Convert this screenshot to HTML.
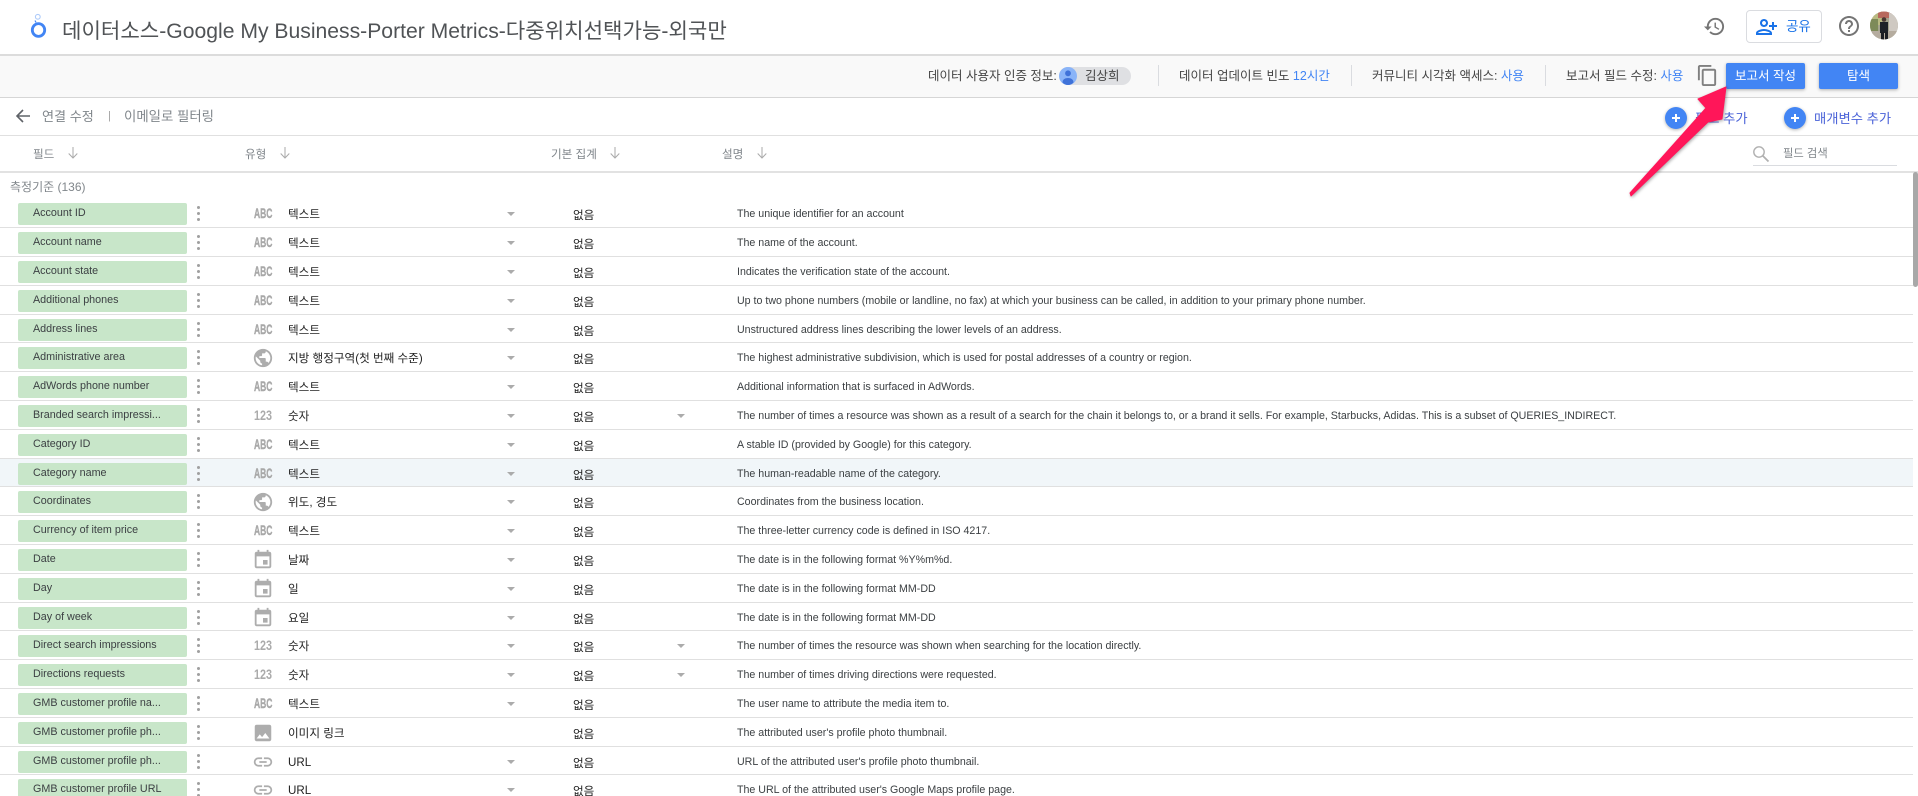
<!DOCTYPE html>
<html lang="ko"><head><meta charset="utf-8"><title>데이터소스</title>
<style>
html,body{margin:0;padding:0;width:1918px;height:796px;overflow:hidden;background:#fff}
body{position:relative;font-family:"Liberation Sans","Noto Sans CJK KR",sans-serif;color:#333}
.x{position:absolute;white-space:nowrap}
.l{position:absolute;left:0;width:1918px;background:#e0e0e0;height:1px}
.bl{color:#4285f4}
.hd{font-size:11.6px;color:#80868b;top:147px;line-height:15px}
.tb{font-size:12.5px;color:#444;top:68px;line-height:17px}
.sep{position:absolute;top:65px;width:1px;height:21px;background:#dadce0}
.btn{position:absolute;top:63px;width:79px;height:26px;background:#4285f4;color:#fff;border-radius:2px;font-size:12.5px;line-height:26px;text-align:center;box-shadow:0 1px 3px rgba(0,0,0,.3)}
.r{position:absolute;left:0;width:1913px;border-bottom:1px solid #e0e0e0;box-sizing:content-box}
.r>*{position:absolute}
.p{left:18px;top:4px;width:169px;height:22px;background:#c8e6c9;border-radius:2px;padding-left:15px;box-sizing:border-box;font-size:10.75px;line-height:21px;color:#3c4043;white-space:nowrap}
.k{left:197px;top:13px;width:3px;height:3px;border-radius:50%;background:#a0a0a0;box-shadow:0 -6px 0 #a0a0a0,0 6px 0 #a0a0a0}
.ic{left:252px;top:4px;width:22px;height:22px;fill:#adadad}
.abc{left:254px;top:7px;font:bold 13.5px/15px "Liberation Sans",sans-serif;color:#a8a8a8;-webkit-text-stroke:.4px #a8a8a8;transform:scaleX(.63);transform-origin:0 0}
.n{left:254px;top:7px;font:bold 13.5px/15px "Liberation Sans",sans-serif;color:#ababab;transform:scaleX(.8);transform-origin:0 0}
.t{left:288px;top:8px;font-size:11.6px;line-height:16px;color:#222;white-space:nowrap}
.a{left:507px;top:13px;width:0;height:0;border-left:4px solid transparent;border-right:4px solid transparent;border-top:4px solid #ababab}
.b{left:677px;top:13px;width:0;height:0;border-left:4px solid transparent;border-right:4px solid transparent;border-top:4px solid #ababab}
.g{left:573px;top:9px;font-size:11.6px;line-height:16px;color:#222}
.d{left:737px;top:8px;font-size:10.65px;line-height:15px;color:#3c4043;white-space:nowrap}
.ar{position:absolute;top:147px;width:10px;height:12px;fill:none;stroke:#aaa;stroke-width:1}
</style></head><body>
<svg width="0" height="0" style="position:absolute"><defs>
<symbol id="gl" viewBox="0 0 24 24"><path d="M12 2C6.48 2 2 6.48 2 12s4.48 10 10 10 10-4.48 10-10S17.52 2 12 2zm-1 17.93c-3.95-.49-7-3.85-7-7.93 0-.62.08-1.21.21-1.79L9 15v1c0 1.1.9 2 2 2v1.93zm6.9-2.54c-.26-.81-1-1.39-1.9-1.39h-1v-3c0-.55-.45-1-1-1H8v-2h2c.55 0 1-.45 1-1V7h2c1.1 0 2-.9 2-2v-.41c2.93 1.19 5 4.06 5 7.41 0 2.08-.8 3.97-2.1 5.39z"/></symbol>
<symbol id="ev" viewBox="0 0 24 24"><path d="M17 12h-5v5h5v-5zM16 1v2H8V1H6v2H5c-1.11 0-1.99.9-1.99 2L3 19c0 1.1.89 2 2 2h14c1.1 0 2-.9 2-2V5c0-1.1-.9-2-2-2h-1V1h-2zm3 18H5V8h14v11z"/></symbol>
<symbol id="im" viewBox="0 0 24 24"><path d="M21 19V5c0-1.1-.9-2-2-2H5c-1.1 0-2 .9-2 2v14c0 1.1.9 2 2 2h14c1.1 0 2-.9 2-2zM8.5 13.5l2.5 3.01L14.5 12l4.5 6H5l3.5-4.5z"/></symbol>
<symbol id="ln" viewBox="0 0 24 24"><path d="M3.9 12c0-1.71 1.39-3.1 3.1-3.1h4V7H7c-2.76 0-5 2.24-5 5s2.24 5 5 5h4v-1.9H7c-1.71 0-3.1-1.39-3.1-3.1zM8 13h8v-2H8v2zm9-6h-4v1.9h4c1.71 0 3.1 1.39 3.1 3.1s-1.39 3.1-3.1 3.1h-4V17h4c2.76 0 5-2.24 5-5s-2.24-5-5-5z"/></symbol>
</defs></svg>

<!-- header -->
<svg class="x" style="left:28px;top:12px" width="22" height="28" viewBox="0 0 22 28"><ellipse cx="10.5" cy="18" rx="6.2" ry="6.4" fill="none" stroke="#4285f4" stroke-width="2.8"/><circle cx="9.8" cy="4.8" r="2.4" fill="none" stroke="#aecbfa" stroke-width="1.1"/><path d="M8 10.5l-1-2" stroke="#4285f4" stroke-width="1.2"/></svg>
<div class="x" id="title" style="left:62px;top:18px;font-size:21.15px;line-height:28px;color:#505356">데이터소스-Google My Business-Porter Metrics-다중위치선택가능-외국만</div>
<svg class="x" style="left:1703px;top:15px" width="23" height="23" viewBox="0 0 24 24" fill="#757575"><path d="M13 3c-4.97 0-9 4.03-9 9H1l3.89 3.89.07.14L9 12H6c0-3.87 3.13-7 7-7s7 3.13 7 7-3.13 7-7 7c-1.93 0-3.68-.79-4.94-2.06l-1.42 1.42C8.27 19.99 10.51 21 13 21c4.97 0 9-4.03 9-9s-4.03-9-9-9zm-1 5v5l4.28 2.54.72-1.21-3.5-2.08V8H12z"/></svg>
<div class="x" style="left:1746px;top:10px;width:76px;height:33px;border:1px solid #dadce0;border-radius:4px;box-sizing:border-box"></div>
<svg class="x" style="left:1755px;top:15px" width="24" height="24" viewBox="0 0 24 24" fill="#1a73e8"><path d="M9 12c2.21 0 4-1.79 4-4s-1.79-4-4-4-4 1.79-4 4 1.79 4 4 4zm0-6c1.1 0 2 .9 2 2s-.9 2-2 2-2-.9-2-2 .9-2 2-2zm0 8c-2.67 0-8 1.34-8 4v2h16v-2c0-2.66-5.33-4-8-4zm-6 4c.22-.72 3.31-2 6-2 2.7 0 5.8 1.29 6 2H3zm16-3v-3h3v-2h-3V7h-2v3h-3v2h3v3h2z"/></svg>
<div class="x" style="left:1786px;top:18px;font-size:13.5px;line-height:18px;color:#1a73e8">공유</div>
<svg class="x" style="left:1837px;top:14px" width="24" height="24" viewBox="0 0 24 24" fill="#757575"><path d="M11 18h2v-2h-2v2zm1-16C6.48 2 2 6.48 2 12s4.48 10 10 10 10-4.48 10-10S17.52 2 12 2zm0 18c-4.41 0-8-3.59-8-8s3.59-8 8-8 8 3.59 8 8-3.59 8-8 8zm0-14c-2.21 0-4 1.79-4 4h2c0-1.1.9-2 2-2s2 .9 2 2c0 2-3 1.75-3 5h2c0-2.25 3-2.5 3-5 0-2.21-1.79-4-4-4z"/></svg>
<svg class="x" style="left:1870px;top:11px" width="28" height="29" viewBox="0 0 28 29"><defs><clipPath id="c"><circle cx="14" cy="14.5" r="14"/></clipPath></defs><g clip-path="url(#c)"><rect width="28" height="29" fill="#a5a48e"/><rect width="12" height="14" fill="#b9ba82"/><rect x="0" y="8" width="8" height="12" fill="#7d8a58"/><rect x="8" y="0" width="14" height="7" fill="#b8695e"/><rect x="19" y="2" width="9" height="20" fill="#cfc9c2"/><rect y="20" width="28" height="9" fill="#b5ac9f"/><rect x="10" y="11" width="8" height="11" fill="#1d2127"/><rect x="11" y="21" width="3" height="8" fill="#1b1d22"/><rect x="15" y="21" width="3" height="8" fill="#1b1d22"/><circle cx="14" cy="8.5" r="2.3" fill="#4a3a33"/></g></svg>
<div class="l" style="top:54px;height:2px;background:#dcdcdc"></div>

<!-- toolbar -->
<div class="x" style="left:0;top:56px;width:1918px;height:41px;background:#f9f9f9"></div>
<div class="x tb" style="left:928px">데이터 사용자 인증 정보:</div>
<div class="x" style="left:1059px;top:67px;width:72px;height:18px;border-radius:9px;background:#dfe0e3"></div>
<svg class="x" style="left:1059px;top:67px" width="18" height="18" viewBox="0 0 18 18"><circle cx="9" cy="9" r="9" fill="#8ab4f8"/><circle cx="9" cy="6.3" r="2.9" fill="#3f72d9"/><path d="M3.5 15.5c0-3 2.5-4.5 5.5-4.5s5.5 1.5 5.5 4.5c-1.5 1.7-3.5 2.5-5.5 2.5s-4-.8-5.5-2.5z" fill="#3f72d9"/></svg>
<div class="x tb" style="left:1085px;color:#444">김상희</div>
<div class="sep" style="left:1158px"></div>
<div class="x tb" style="left:1179px">데이터 업데이트 빈도 <span class="bl">12시간</span></div>
<div class="sep" style="left:1351px"></div>
<div class="x tb" style="left:1372px">커뮤니티 시각화 액세스: <span class="bl">사용</span></div>
<div class="sep" style="left:1545px"></div>
<div class="x tb" style="left:1566px">보고서 필드 수정: <span class="bl">사용</span></div>
<svg class="x" style="left:1696px;top:64px" width="23" height="23" viewBox="0 0 24 24" fill="#808080"><path d="M16 1H4c-1.1 0-2 .9-2 2v14h2V3h12V1zm3 4H8c-1.1 0-2 .9-2 2v14c0 1.1.9 2 2 2h11c1.1 0 2-.9 2-2V7c0-1.1-.9-2-2-2zm0 16H8V7h11v14z"/></svg>
<div class="btn" style="left:1726px">보고서 작성</div>
<div class="btn" style="left:1819px">탐색</div>
<div class="l" style="top:97px;height:1px;background:#d6d6d6"></div>

<!-- subheader -->
<svg class="x" style="left:15px;top:108px" width="16" height="16" viewBox="0 0 16 16" fill="none" stroke="#5f6368" stroke-width="1.6"><path d="M15 8H2M8 2L2 8l6 6"/></svg>
<div class="x" style="left:42px;top:108px;font-size:13.1px;line-height:18px;color:#80868b">연결 수정</div>
<div class="x" style="left:108px;top:109px;font-size:11px;line-height:15px;color:#a0a0a0">|</div>
<div class="x" style="left:124px;top:108px;font-size:13.4px;line-height:18px;color:#80868b">이메일로 필터링</div>
<div class="x" style="left:1665px;top:107px;width:22px;height:22px;border-radius:50%;background:#4285f4;box-shadow:0 1px 3px rgba(0,0,0,.3)"></div>
<div class="x" style="left:1672px;top:117px;width:8px;height:2px;background:#fff"></div><div class="x" style="left:1675px;top:114px;width:2px;height:8px;background:#fff"></div>
<div class="x" style="left:1695px;top:110px;font-size:13.3px;line-height:18px;color:#4a62d8">필드 추가</div>
<div class="x" style="left:1784px;top:107px;width:22px;height:22px;border-radius:50%;background:#4285f4;box-shadow:0 1px 3px rgba(0,0,0,.3)"></div>
<div class="x" style="left:1791px;top:117px;width:8px;height:2px;background:#fff"></div><div class="x" style="left:1794px;top:114px;width:2px;height:8px;background:#fff"></div>
<div class="x" style="left:1814px;top:110px;font-size:13.3px;line-height:18px;color:#4a62d8">매개변수 추가</div>
<div class="l" style="top:135px"></div>

<!-- column head -->
<div class="x hd" style="left:33px">필드</div><svg class="ar" style="left:68px" viewBox="0 0 10 12"><path d="M5 0v11M.7 6.5L5 11l4.3-4.5"/></svg>
<div class="x hd" style="left:245px">유형</div><svg class="ar" style="left:280px" viewBox="0 0 10 12"><path d="M5 0v11M.7 6.5L5 11l4.3-4.5"/></svg>
<div class="x hd" style="left:551px">기본 집계</div><svg class="ar" style="left:610px" viewBox="0 0 10 12"><path d="M5 0v11M.7 6.5L5 11l4.3-4.5"/></svg>
<div class="x hd" style="left:722px">설명</div><svg class="ar" style="left:757px" viewBox="0 0 10 12"><path d="M5 0v11M.7 6.5L5 11l4.3-4.5"/></svg>
<svg class="x" style="left:1752px;top:145px" width="18" height="18" viewBox="0 0 18 18" fill="none" stroke="#b0b0b0" stroke-width="1.4"><circle cx="7" cy="7" r="5.2"/><path d="M11 11l5.5 5.5" stroke-width="1.8"/></svg>
<div class="x" style="left:1783px;top:147px;font-size:11.3px;line-height:15px;color:#80868b">필드 검색</div>
<div class="x" style="left:1753px;top:165px;width:144px;height:1px;background:#dadce0"></div>
<div class="l" style="top:171px;height:2px;background:#e2e2e2"></div>
<div class="x" style="left:10px;top:179px;font-size:12px;line-height:16px;color:#80868b">측정기준 (136)</div>

<!-- rows -->
<div class="r" style="top:199px;height:28px"><div class="p">Account ID</div><i class="k"></i><span class="abc">ABC</span><span class="t">텍스트</span><b class="a"></b><span class="g">없음</span><span class="d">The unique identifier for an account</span></div>
<div class="r" style="top:228px;height:28px"><div class="p">Account name</div><i class="k"></i><span class="abc">ABC</span><span class="t">텍스트</span><b class="a"></b><span class="g">없음</span><span class="d">The name of the account.</span></div>
<div class="r" style="top:257px;height:28px"><div class="p">Account state</div><i class="k"></i><span class="abc">ABC</span><span class="t">텍스트</span><b class="a"></b><span class="g">없음</span><span class="d">Indicates the verification state of the account.</span></div>
<div class="r" style="top:286px;height:28px"><div class="p">Additional phones</div><i class="k"></i><span class="abc">ABC</span><span class="t">텍스트</span><b class="a"></b><span class="g">없음</span><span class="d">Up to two phone numbers (mobile or landline, no fax) at which your business can be called, in addition to your primary phone number.</span></div>
<div class="r" style="top:315px;height:27px"><div class="p">Address lines</div><i class="k"></i><span class="abc">ABC</span><span class="t">텍스트</span><b class="a"></b><span class="g">없음</span><span class="d">Unstructured address lines describing the lower levels of an address.</span></div>
<div class="r" style="top:343px;height:28px"><div class="p">Administrative area</div><i class="k"></i><svg class="ic"><use href="#gl"/></svg><span class="t">지방 행정구역(첫 번째 수준)</span><b class="a"></b><span class="g">없음</span><span class="d">The highest administrative subdivision, which is used for postal addresses of a country or region.</span></div>
<div class="r" style="top:372px;height:28px"><div class="p">AdWords phone number</div><i class="k"></i><span class="abc">ABC</span><span class="t">텍스트</span><b class="a"></b><span class="g">없음</span><span class="d">Additional information that is surfaced in AdWords.</span></div>
<div class="r" style="top:401px;height:28px"><div class="p">Branded search impressi...</div><i class="k"></i><span class="n">123</span><span class="t">숫자</span><b class="a"></b><span class="g">없음</span><b class="b"></b><span class="d">The number of times a resource was shown as a result of a search for the chain it belongs to, or a brand it sells. For example, Starbucks, Adidas. This is a subset of QUERIES_INDIRECT.</span></div>
<div class="r" style="top:430px;height:28px"><div class="p">Category ID</div><i class="k"></i><span class="abc">ABC</span><span class="t">텍스트</span><b class="a"></b><span class="g">없음</span><span class="d">A stable ID (provided by Google) for this category.</span></div>
<div class="r" style="top:459px;height:27px;background:#f1f6f9"><div class="p">Category name</div><i class="k"></i><span class="abc">ABC</span><span class="t">텍스트</span><b class="a"></b><span class="g">없음</span><span class="d">The human-readable name of the category.</span></div>
<div class="r" style="top:487px;height:28px"><div class="p">Coordinates</div><i class="k"></i><svg class="ic"><use href="#gl"/></svg><span class="t">위도, 경도</span><b class="a"></b><span class="g">없음</span><span class="d">Coordinates from the business location.</span></div>
<div class="r" style="top:516px;height:28px"><div class="p">Currency of item price</div><i class="k"></i><span class="abc">ABC</span><span class="t">텍스트</span><b class="a"></b><span class="g">없음</span><span class="d">The three-letter currency code is defined in ISO 4217.</span></div>
<div class="r" style="top:545px;height:28px"><div class="p">Date</div><i class="k"></i><svg class="ic"><use href="#ev"/></svg><span class="t">날짜</span><b class="a"></b><span class="g">없음</span><span class="d">The date is in the following format %Y%m%d.</span></div>
<div class="r" style="top:574px;height:28px"><div class="p">Day</div><i class="k"></i><svg class="ic"><use href="#ev"/></svg><span class="t">일</span><b class="a"></b><span class="g">없음</span><span class="d">The date is in the following format MM-DD</span></div>
<div class="r" style="top:603px;height:27px"><div class="p">Day of week</div><i class="k"></i><svg class="ic"><use href="#ev"/></svg><span class="t">요일</span><b class="a"></b><span class="g">없음</span><span class="d">The date is in the following format MM-DD</span></div>
<div class="r" style="top:631px;height:28px"><div class="p">Direct search impressions</div><i class="k"></i><span class="n">123</span><span class="t">숫자</span><b class="a"></b><span class="g">없음</span><b class="b"></b><span class="d">The number of times the resource was shown when searching for the location directly.</span></div>
<div class="r" style="top:660px;height:28px"><div class="p">Directions requests</div><i class="k"></i><span class="n">123</span><span class="t">숫자</span><b class="a"></b><span class="g">없음</span><b class="b"></b><span class="d">The number of times driving directions were requested.</span></div>
<div class="r" style="top:689px;height:28px"><div class="p">GMB customer profile na...</div><i class="k"></i><span class="abc">ABC</span><span class="t">텍스트</span><b class="a"></b><span class="g">없음</span><span class="d">The user name to attribute the media item to.</span></div>
<div class="r" style="top:718px;height:28px"><div class="p">GMB customer profile ph...</div><i class="k"></i><svg class="ic"><use href="#im"/></svg><span class="t">이미지 링크</span><span class="g">없음</span><span class="d">The attributed user's profile photo thumbnail.</span></div>
<div class="r" style="top:747px;height:27px"><div class="p">GMB customer profile ph...</div><i class="k"></i><svg class="ic"><use href="#ln"/></svg><span class="t">URL</span><b class="a"></b><span class="g">없음</span><span class="d">URL of the attributed user's profile photo thumbnail.</span></div>
<div class="r" style="top:775px;height:28px"><div class="p">GMB customer profile URL</div><i class="k"></i><svg class="ic"><use href="#ln"/></svg><span class="t">URL</span><b class="a"></b><span class="g">없음</span><span class="d">The URL of the attributed user's Google Maps profile page.</span></div>

<div class="x" style="left:1913px;top:172px;width:5px;height:115px;background:#a8a8a8;border-radius:3px"></div>

<!-- annotation arrow -->
<svg class="x" style="left:0;top:0;filter:drop-shadow(1px 1px 1.5px rgba(0,0,0,.35))" width="1918" height="796" viewBox="0 0 1918 796"><polygon points="1726,87 1698,99 1706,108 1630,193 1631,196 1708,122 1722,119" fill="#ff1659" stroke="#ff1659" stroke-width="1" stroke-linejoin="round"/></svg>
</body></html>
